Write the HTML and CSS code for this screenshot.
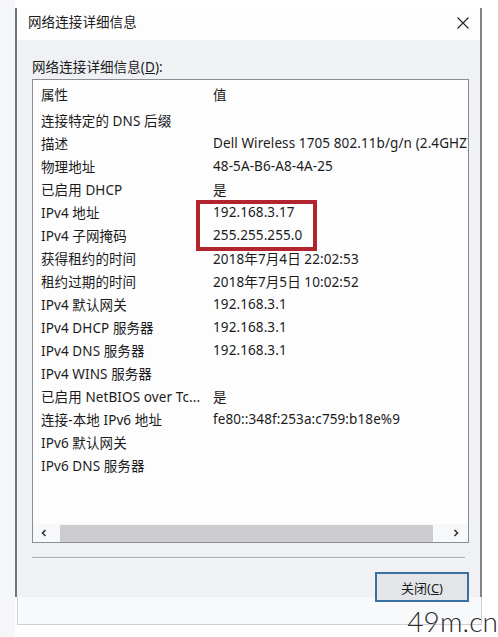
FILE: index.html
```html
<!DOCTYPE html>
<html>
<head>
    <title>网络连接详细信息</title>
    <link rel="stylesheet" href="styles.css">
</head>
<body>
    <div class="page">
        <div class="window">
            <div class="titlebar">
                <span class="title">网络连接详细信息</span>
                <svg class="close" width="12" height="12" viewBox="0 0 12 12">
                    <path d="M0.5 0.5 L11.5 11.5 M11.5 0.5 L0.5 11.5" stroke="#222" stroke-width="1.1" fill="none"/>
                </svg>
            </div>
            <div class="dialog-body">
                <div class="label">网络连接详细信息(<u>D</u>):</div>
                <div class="listbox">
                    <div class="list-head">
                        <span class="col-prop">属性</span>
                        <span class="col-val">值</span>
                    </div>
                    <div class="list-rows">
                        <div class="row"><span class="col-prop">连接特定的 DNS 后缀</span><span class="col-val"></span></div>
                        <div class="row"><span class="col-prop">描述</span><span class="col-val">Dell Wireless 1705 802.11b/g/n (2.4GHZ)</span></div>
                        <div class="row"><span class="col-prop">物理地址</span><span class="col-val">48-5A-B6-A8-4A-25</span></div>
                        <div class="row"><span class="col-prop">已启用 DHCP</span><span class="col-val">是</span></div>
                        <div class="row"><span class="col-prop">IPv4 地址</span><span class="col-val">192.168.3.17</span></div>
                        <div class="row"><span class="col-prop">IPv4 子网掩码</span><span class="col-val">255.255.255.0</span></div>
                        <div class="row"><span class="col-prop">获得租约的时间</span><span class="col-val">2018年7月4日 22:02:53</span></div>
                        <div class="row"><span class="col-prop">租约过期的时间</span><span class="col-val">2018年7月5日 10:02:52</span></div>
                        <div class="row"><span class="col-prop">IPv4 默认网关</span><span class="col-val">192.168.3.1</span></div>
                        <div class="row"><span class="col-prop">IPv4 DHCP 服务器</span><span class="col-val">192.168.3.1</span></div>
                        <div class="row"><span class="col-prop">IPv4 DNS 服务器</span><span class="col-val">192.168.3.1</span></div>
                        <div class="row"><span class="col-prop">IPv4 WINS 服务器</span><span class="col-val"></span></div>
                        <div class="row"><span class="col-prop">已启用 NetBIOS over Tc...</span><span class="col-val">是</span></div>
                        <div class="row"><span class="col-prop">连接-本地 IPv6 地址</span><span class="col-val">fe80::348f:253a:c759:b18e%9</span></div>
                        <div class="row"><span class="col-prop">IPv6 默认网关</span><span class="col-val"></span></div>
                        <div class="row"><span class="col-prop">IPv6 DNS 服务器</span><span class="col-val"></span></div>
                    </div>
                    <div class="hscroll">
                        <svg class="arrow arrow-left" width="8" height="8" viewBox="0 0 8 8">
                            <path d="M5.5 1 L2.5 4 L5.5 7" stroke="#333" stroke-width="1.6" fill="none"/>
                        </svg>
                        <div class="thumb"></div>
                        <svg class="arrow arrow-right" width="8" height="8" viewBox="0 0 8 8">
                            <path d="M2.5 1 L5.5 4 L2.5 7" stroke="#333" stroke-width="1.6" fill="none"/>
                        </svg>
                    </div>
                    <!-- annotation box drawn over the two IPv4 values -->
                    <div class="highlight"></div>
                </div>
                <div class="separator"></div>
                <div class="actions">
                    <button class="btn">关闭(<u>C</u>)</button>
                </div>
            </div>
            <div class="bottom-strip"></div>
        </div>
        <div class="watermark">49m.cn</div>
    </div>
</body>
</html>
```

FILE: styles.css
```css
html, body {
    margin: 0;
    padding: 0;
}

body {
    width: 498px;
    height: 637px;
    overflow: hidden;
    background: #ffffff;
    font-family: "Noto Sans", "Noto Sans CJK SC", sans-serif;
    font-size: 13.5px;
    letter-spacing: 0.1px;
    color: #1b1b1b;
}

.page {
    position: relative;
    height: 637px;
    padding-top: 8px;
    box-sizing: border-box;
    background: linear-gradient(to right, #f5f6f7 0, #f5f6f7 15px, #ffffff 15px);
}

.window {
    margin-left: 15px;
    width: 467px;
}

.titlebar {
    height: 32px;
    display: flex;
    align-items: center;
    justify-content: space-between;
    padding: 0 11px 4px 11px;
    box-sizing: border-box;
    background: #fdfdfd;
    border-left: 2px solid #6f7479;
    border-right: 2px solid #80858a;
}

.title {
    line-height: 18px;
}

.close {
    margin-top: 1px;
}

.dialog-body {
    height: 557px;
    box-sizing: border-box;
    padding: 18px 11px 0 15px;
    background: #eff1f4;
    border-left: 2px solid #6f7479;
    border-right: 2px solid #80858a;
}

.label {
    line-height: 18px;
}

.listbox {
    position: relative;
    margin-top: 3px;
    height: 464px;
    box-sizing: border-box;
    display: flex;
    flex-direction: column;
    background: #fdfdfe;
    border: 1px solid #8a8e94;
    overflow: hidden;
}

.list-head {
    display: flex;
    height: 28px;
    align-items: center;
    flex: none;
}

.list-rows {
    flex: 1;
}

.row {
    display: flex;
    height: 23px;
    align-items: center;
    white-space: nowrap;
}

.col-prop {
    flex: none;
    width: 172px;
    padding-left: 8px;
    white-space: nowrap;
    overflow: hidden;
}

.col-val {
    flex: 1;
    white-space: nowrap;
    overflow: hidden;
}

.hscroll {
    flex: none;
    height: 18px;
    display: flex;
    align-items: center;
    background: #f7f8f9;
}

.arrow {
    flex: none;
}

.arrow-left {
    margin: 0 12px 0 7px;
}

.arrow-right {
    margin: 0 8px 0 19px;
}

.thumb {
    flex: 1;
    height: 17px;
    background: #cdcdcf;
}

.highlight {
    position: absolute;
    left: 163px;
    top: 120px;
    width: 121px;
    height: 51px;
    box-sizing: border-box;
    border: 4px solid #b2252f;
}

.separator {
    margin-top: 14px;
    margin-right: 4px;
    height: 1px;
    background: #a9acb0;
    border-bottom: 1px solid #fbfbfc;
}

.actions {
    display: flex;
    justify-content: flex-end;
    margin-top: 13px;
}

.btn {
    position: relative;
    width: 94px;
    height: 30px;
    padding: 0;
    font-family: "Noto Sans", "Noto Sans CJK SC", sans-serif;
    font-size: 13px;
    color: #1b1b1b;
    background: #e3e5e8;
    border: 2px solid #3b6f9e;
}

.bottom-strip {
    margin-left: 2px;
    height: 27px;
    background: #f8f9fa;
    border: 1px solid #cdd0d4;
    border-top: none;
}

.watermark {
    position: absolute;
    right: 0;
    bottom: 1px;
    font-family: "Lato", "Open Sans", sans-serif;
    font-weight: 300;
    font-size: 28px;
    line-height: 30px;
    color: #2b2b2b;
}
```
